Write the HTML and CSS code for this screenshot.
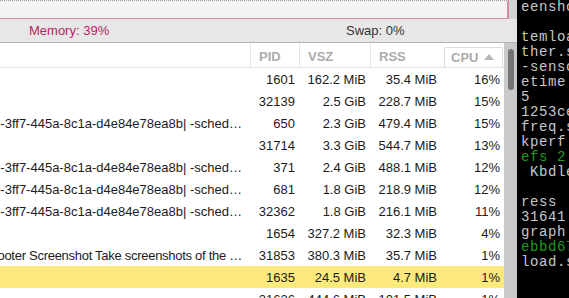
FILE: index.html
```html
<!DOCTYPE html>
<html>
<head>
<meta charset="utf-8">
<link rel="stylesheet" href="styles.css">
</head>
<body>
<div class="screen">
  <div class="app">
    <div class="top"><div class="graph"></div></div>
    <div class="status"><span class="mem">Memory: 39%</span><span class="swap">Swap: 0%</span></div>
    <div class="listwrap">
      <div class="list">
        <div class="row head">
          <div class="c cmd"></div>
          <div class="c sep">PID</div>
          <div class="c sep">VSZ</div>
          <div class="c sep">RSS</div>
          <div class="c cpuh"><div class="sortbox">CPU <span class="arrow"></span></div></div>
        </div>
        <div class="row"><div class="c cmd"></div><div class="c pid">1601</div><div class="c vsz">162.2 MiB</div><div class="c rss">35.4 MiB</div><div class="c cpu">16%</div></div>
        <div class="row"><div class="c cmd"></div><div class="c pid">32139</div><div class="c vsz">2.5 GiB</div><div class="c rss">228.7 MiB</div><div class="c cpu">15%</div></div>
        <div class="row"><div class="c cmd"><span class="hex">-a1b2-3ff7-445a-8c1a-d4e84e78ea8b| -sched…</span></div><div class="c pid">650</div><div class="c vsz">2.3 GiB</div><div class="c rss">479.4 MiB</div><div class="c cpu">15%</div></div>
        <div class="row"><div class="c cmd"></div><div class="c pid">31714</div><div class="c vsz">3.3 GiB</div><div class="c rss">544.7 MiB</div><div class="c cpu">13%</div></div>
        <div class="row"><div class="c cmd"><span class="hex">-a1b2-3ff7-445a-8c1a-d4e84e78ea8b| -sched…</span></div><div class="c pid">371</div><div class="c vsz">2.4 GiB</div><div class="c rss">488.1 MiB</div><div class="c cpu">12%</div></div>
        <div class="row"><div class="c cmd"><span class="hex">-a1b2-3ff7-445a-8c1a-d4e84e78ea8b| -sched…</span></div><div class="c pid">681</div><div class="c vsz">1.8 GiB</div><div class="c rss">218.9 MiB</div><div class="c cpu">12%</div></div>
        <div class="row"><div class="c cmd"><span class="hex">-a1b2-3ff7-445a-8c1a-d4e84e78ea8b| -sched…</span></div><div class="c pid">32362</div><div class="c vsz">1.8 GiB</div><div class="c rss">216.1 MiB</div><div class="c cpu">11%</div></div>
        <div class="row"><div class="c cmd"></div><div class="c pid">1654</div><div class="c vsz">327.2 MiB</div><div class="c rss">32.3 MiB</div><div class="c cpu">4%</div></div>
        <div class="row"><div class="c cmd"><span class="wide">xfce4-screenshooter Screenshot Take screenshots of the …</span></div><div class="c pid">31853</div><div class="c vsz">380.3 MiB</div><div class="c rss">35.7 MiB</div><div class="c cpu">1%</div></div>
        <div class="row sel"><div class="c cmd"></div><div class="c pid">1635</div><div class="c vsz">24.5 MiB</div><div class="c rss">4.7 MiB</div><div class="c cpu">1%</div></div>
        <div class="row"><div class="c cmd"></div><div class="c pid">31636</div><div class="c vsz">444.6 MiB</div><div class="c rss">101.5 MiB</div><div class="c cpu">1%</div></div>
      </div>
      <div class="scrollbar"><div class="thumb"></div></div>
    </div>
  </div>
  <div class="term"><div class="l">eenshooter</div><div class="l"> </div><div class="l">temload.sh</div><div class="l">ther.sh</div><div class="l">-sensors</div><div class="l">etime </div><div class="l">5</div><div class="l">1253ce</div><div class="l">freq.sh</div><div class="l">kperf </div><div class="l g">efs 2.0</div><div class="l"> Kbdle</div><div class="l"> </div><div class="l">ress </div><div class="l">31641.</div><div class="l">graph</div><div class="l g">ebbd67</div><div class="l">load.sh</div></div>
</div>
</body>
</html>
```

FILE: styles.css
```css
html, body {
  margin: 0;
  padding: 0;
}
body {
  width: 569px;
  height: 298px;
  overflow: hidden;
  font-family: "Liberation Sans", Arial, sans-serif;
  font-size: 13px;
  background: #000;
}
.screen {
  display: flex;
  width: 569px;
  height: 298px;
  overflow: hidden;
}
.app {
  width: 517px;
  flex: none;
  display: flex;
  flex-direction: column;
  background: #d2d2d2;
}
.top {
  height: 19px;
  background: #d2d2d2;
}
.graph {
  box-sizing: border-box;
  width: 509px;
  height: 19px;
  background: #f3f3f3;
  border-top: 1px dotted #9a9a9a;
  border-bottom: 1px solid #d58ba8;
  border-right: 2px solid #d58ba8;
}
.status {
  box-sizing: border-box;
  height: 24px;
  display: grid;
  grid-template-columns: 317px auto;
  align-items: center;
  padding-left: 29px;
  padding-bottom: 1px;
  background: #e7e7e7;
  border-bottom: 1px solid #b2b2b2;
}
.mem { color: #b52660; }
.swap { color: #333; }
.listwrap {
  flex: 1;
  display: flex;
  min-height: 0;
}
.list {
  width: 504px;
  background: #fff;
  overflow: hidden;
}
.row {
  display: grid;
  grid-template-columns: 250px 49px 71px 73px 61px;
  height: 22px;
  align-items: center;
  color: #1b1b1b;
  white-space: nowrap;
}
.row.sel { background: #fcea7d; }
.c {
  box-sizing: border-box;
  overflow: hidden;
  text-align: right;
}
.cmd {
  display: flex;
  justify-content: flex-end;
  padding-right: 8px;
}
.cmd span { flex: none; }
.cmd .hex { letter-spacing: 0; }
.cmd .wide { letter-spacing: -0.28px; }
.pid { padding-right: 4px; }
.vsz { padding-right: 4px; }
.rss { padding-right: 6px; }
.cpu { padding-right: 4px; }
.row.head {
  box-sizing: border-box;
  height: 25px;
  align-items: stretch;
  border-bottom: 1px solid #e3e3e3;
  color: #acacac;
  font-weight: bold;
}
.head .c {
  text-align: left;
  display: flex;
  align-items: center;
  padding-top: 3px;
}
.head .sep {
  border-left: 1px solid #e6e6e6;
  padding-left: 8px;
}
.head .cpuh {
  padding-top: 4px;
  padding-left: 1px;
  padding-right: 1px;
  align-items: stretch;
}
.sortbox {
  flex: 1;
  box-sizing: border-box;
  border: 1px solid #dcdcdc;
  border-bottom: none;
  border-radius: 2px 2px 0 0;
  display: flex;
  align-items: center;
  padding-left: 6px;
  gap: 6px;
}
.arrow {
  width: 0;
  height: 0;
  border-left: 5px solid transparent;
  border-right: 5px solid transparent;
  border-bottom: 6px solid #b5b5b5;
  margin-top: -2px;
}
.scrollbar {
  width: 13px;
  background: #c9c9c9;
  padding-top: 6px;
  padding-left: 4px;
  box-sizing: border-box;
}
.thumb {
  width: 6px;
  height: 41px;
  background: #747474;
  border-radius: 3px;
}
.term {
  flex: 1;
  background: #000;
  padding-left: 3px;
  font-family: "Liberation Mono", "DejaVu Sans Mono", monospace;
  font-size: 14px;
  letter-spacing: 0.6px;
  line-height: 15px;
  color: #c8c8c8;
  overflow: hidden;
  border-left: 1px solid #000;
}
.l { white-space: pre; height: 15px; }
.l.g { color: #1f9a1f; }
```
